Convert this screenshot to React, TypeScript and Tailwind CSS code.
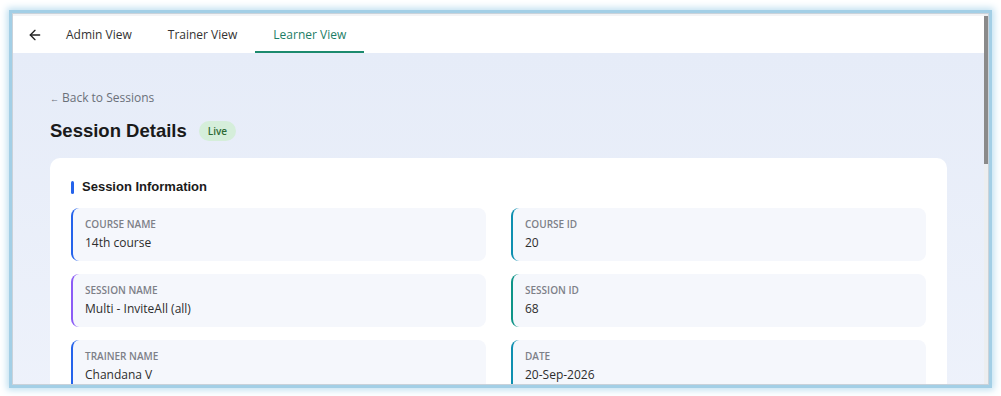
import { ArrowLeft } from "lucide-react"

const fields = [
  { label: "Course Name", value: "14th course", bar: "border-l-[#2563eb]" },
  { label: "Course ID", value: "20", bar: "border-l-[#0e8fb0]" },
  { label: "Session Name", value: "Multi - InviteAll (all)", bar: "border-l-[#8b5cf6]" },
  { label: "Session ID", value: "68", bar: "border-l-[#0f9488]" },
  { label: "Trainer Name", value: "Chandana V", bar: "border-l-[#2563eb]" },
  { label: "Date", value: "20-Sep-2026", bar: "border-l-[#0e8fb0]" },
]

const tabs = ["Admin View", "Trainer View", "Learner View"]

export default function App() {
  return (
    <div className="w-[1001px] h-[396px] bg-white pt-[13px] pl-[12px] font-['Open_Sans',sans-serif]">
      <div className="w-[977px] h-[372px] overflow-hidden border border-[#c9d2da] shadow-[0_0_0_3px_#a3cfe6,0_0_7px_5px_#bfdff0] flex">
        <div className="flex-1 flex flex-col bg-[#f2f3f5] pt-[2px]">
          <nav className="h-[37px] bg-white flex items-stretch pl-[14px] shrink-0">
            <div className="flex items-center pr-[5px]">
              <ArrowLeft className="w-[16px] h-[16px] text-[#222]" strokeWidth={2} />
            </div>
            {tabs.map((t) => {
              const active = t === "Learner View"
              return (
                <div
                  key={t}
                  className={
                    active
                      ? "px-[18px] flex items-center text-[12px] font-medium text-[#1c7d66] border-b-2 border-[#1c8a6e] pt-[2px]"
                      : "px-[18px] flex items-center text-[12px] font-medium text-[#333] border-b-2 border-transparent pt-[2px]"
                  }
                >
                  {t}
                </div>
              )
            })}
          </nav>

          <main className="flex-1 bg-gradient-to-b from-[#e6ecf8] to-[#eef2fb] px-[37px] pt-[37px]">
            <a className="block text-[12px] leading-[16px] text-[#6b7079]">
              <span className="text-[9px] mr-[3px]">←</span>Back to Sessions
            </a>
            <div className="flex items-center mt-[12px] gap-[12px]">
              <h1 className="font-['Liberation_Sans',sans-serif] font-bold text-[18.5px] leading-[24px] text-[#1a1a1a]">
                Session Details
              </h1>
              <span className="h-[20px] px-[9px] rounded-full bg-[#d5eeda] text-[#2e6a34] text-[10px] font-semibold flex items-center">
                Live
              </span>
            </div>

            <section className="mt-[15px] bg-white rounded-[10px] px-[21px] pt-[20px] pb-[20px]">
              <div className="flex items-center gap-[8px] mb-[12px]">
                <span className="w-[3px] h-[13px] rounded-full bg-[#2563eb]" />
                <h2 className="font-['Liberation_Sans',sans-serif] font-bold text-[13px] leading-[18px] text-[#1a1a1a]">
                  Session Information
                </h2>
              </div>
              <div className="grid grid-cols-2 gap-x-[25px] gap-y-[13px]">
                {fields.map((f) => (
                  <div
                    key={f.label}
                    className={`h-[53px] rounded-[8px] bg-[#f5f7fc] border-l-2 ${f.bar} pl-[12px] pt-[10px]`}
                  >
                    <div className="text-[10px] leading-[13px] font-semibold uppercase text-[#7d8088]">
                      {f.label}
                    </div>
                    <div className="mt-[4px] text-[12px] leading-[16px] text-[#2d2d2d]">{f.value}</div>
                  </div>
                ))}
              </div>
            </section>
          </main>
        </div>
        <div className="w-[4px] bg-[#eceef0] pt-[2px]">
          <div className="h-[148px] bg-[#8a8a8a]" />
        </div>
      </div>
    </div>
  )
}
